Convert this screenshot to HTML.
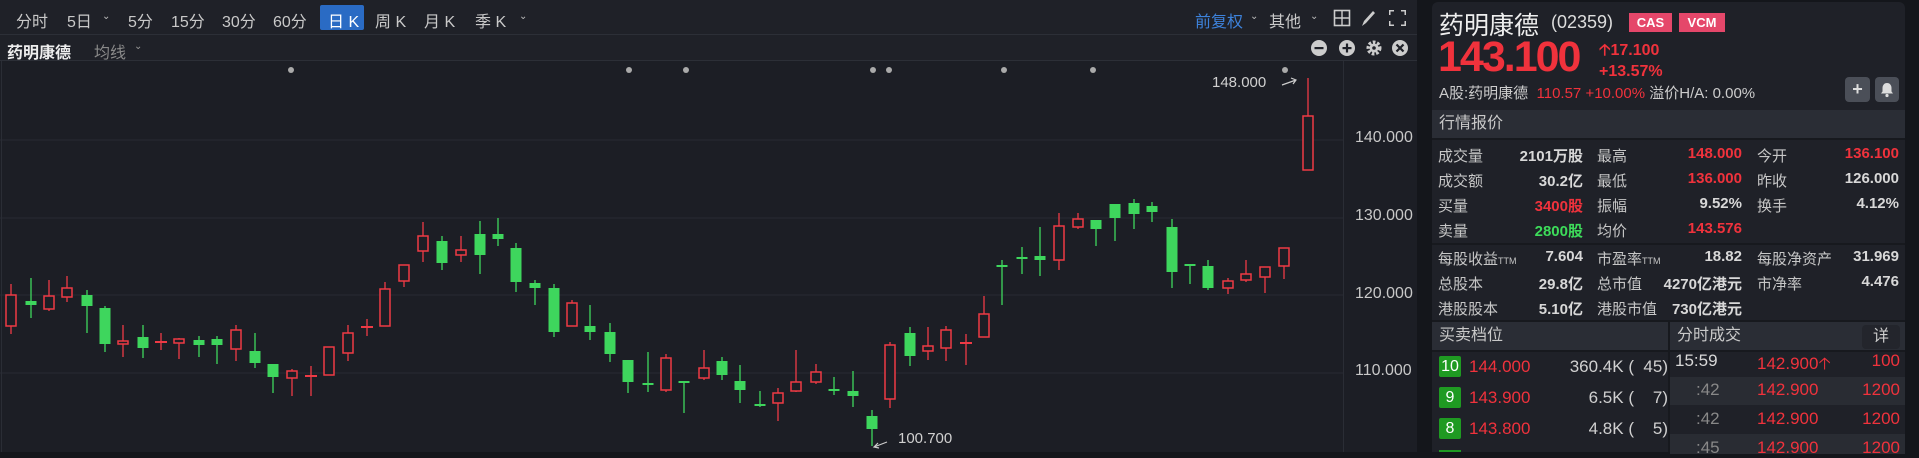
<!DOCTYPE html>
<html><head><meta charset="utf-8">
<style>
*{margin:0;padding:0;box-sizing:border-box}
body{width:1919px;height:452px;background:#14161b;font-family:"Liberation Sans","Noto Sans CJK SC",sans-serif;position:relative;overflow:hidden;color:#d0d0d0}
.a{position:absolute;white-space:nowrap}
#left{position:absolute;left:0;top:0;width:1417px;height:452px;background:#1c1e25}
#tb{position:absolute;left:0;top:0;width:1417px;height:35px;background:#1f2128;border-bottom:1px solid #2c2f37}
#tb2{position:absolute;left:0;top:35px;width:1417px;height:26px;background:#1f2128;border-bottom:1px solid #2c2f37}
.t{font-size:16px;color:#c9c9c9;top:8px}
.chev{font-size:10px;color:#bbb}
#rp{position:absolute;left:1432px;top:2px;width:473px;height:450px;background:#1f2128;border-radius:6px 6px 0 0}
.hdr{position:absolute;background:#2a2d35;font-size:16px;color:#c9c9c9;padding-left:7px;line-height:28px}
.r{position:absolute;font-size:15px;white-space:nowrap}
.lb{color:#c6c6c6}
.v{font-weight:bold;color:#d8d8d8;text-align:right}
.red{color:#f0323c}.grn{color:#3ddc5a}
.bd{position:absolute;width:22px;height:21px;background:#1f9a22;color:#fff;font-size:16px;text-align:center;line-height:21px;border-radius:2px}
.ax{position:absolute;font-size:16px;color:#c8c8c8;left:1355px}
</style></head><body>
<div id="left"></div>
<div id="tb">
 <span class="a t" style="left:16px">分时</span>
 <span class="a t" style="left:67px">5日</span><span class="a chev" style="left:102px;top:11px">&#8964;</span>
 <span class="a t" style="left:128px">5分</span>
 <span class="a t" style="left:171px">15分</span>
 <span class="a t" style="left:222px">30分</span>
 <span class="a t" style="left:273px">60分</span>
 <div class="a" style="left:320px;top:5px;width:44px;height:25px;background:#2a6bc4;border-radius:2px"></div>
 <span class="a t" style="left:328px;color:#fff">日 K</span>
 <span class="a t" style="left:375px">周 K</span>
 <span class="a t" style="left:424px">月 K</span>
 <span class="a t" style="left:475px">季 K</span><span class="a chev" style="left:519px;top:11px">&#8964;</span>
 <span class="a t" style="left:1195px;color:#3d82db">前复权</span><span class="a chev" style="left:1250px;top:11px">&#8964;</span>
 <span class="a t" style="left:1269px">其他</span><span class="a chev" style="left:1310px;top:11px">&#8964;</span>
 <svg class="a" style="left:1333px;top:9px" width="74" height="18" viewBox="0 0 74 18">
  <rect x="1.5" y="1.5" width="15" height="15" fill="none" stroke="#ccc" stroke-width="1.6"/><path d="M9 1.5V16.5M1.5 9H16.5" stroke="#ccc" stroke-width="1.4"/>
  <path d="M29 17l2-5 9-10 2 2-9 10z" fill="#ccc"/>
  <path d="M56 1h5v1.5h-3.5V6H56zM73 1h-5v1.5h3.5V6H73zM56 17h5v-1.5h-3.5V12H56zM73 17h-5v-1.5h3.5V12H73z" fill="#ccc"/>
 </svg>
</div>
<div id="tb2">
 <span class="a" style="left:7px;top:4px;font-size:16px;font-weight:bold;color:#eee">药明康德</span>
 <span class="a" style="left:94px;top:4px;font-size:16px;color:#8a8a8a">均线</span><span class="a chev" style="left:134px;top:6px;color:#999">&#8964;</span>
 <svg class="a" style="left:1310px;top:4px" width="100" height="18" viewBox="0 0 100 18">
  <circle cx="9" cy="9" r="8" fill="#ccc"/><rect x="4.5" y="8" width="9" height="2.2" fill="#1f2128"/>
  <circle cx="37" cy="9" r="8" fill="#ccc"/><rect x="32.5" y="8" width="9" height="2.2" fill="#1f2128"/><rect x="35.9" y="4.5" width="2.2" height="9" fill="#1f2128"/>
  <circle cx="64" cy="9" r="5.5" fill="none" stroke="#ccc" stroke-width="4" stroke-dasharray="2.5 1.6"/><circle cx="64" cy="9" r="4.5" fill="#ccc"/><circle cx="64" cy="9" r="1.8" fill="#1f2128"/>
  <circle cx="90" cy="9" r="8" fill="#ccc"/><path d="M86.5 5.5l7 7M93.5 5.5l-7 7" stroke="#1f2128" stroke-width="2.2"/>
 </svg>
</div>
<svg id="ch" class="a" style="left:0;top:0" width="1417" height="452"></svg>
<span class="ax" style="top:129px">140.000</span>
<span class="ax" style="top:207px">130.000</span>
<span class="ax" style="top:285px">120.000</span>
<span class="ax" style="top:362px">110.000</span>
<span class="a" style="left:1212px;top:74px;font-size:15px;color:#d0d0d0">148.000</span>
<span class="a" style="left:898px;top:430px;font-size:15px;color:#d0d0d0">100.700</span>

<div id="rp">
 <span class="a" style="left:7px;top:4px;font-size:25px;color:#eee">药明康德</span>
 <span class="a" style="left:119px;top:10px;font-size:18px;color:#ddd">(02359)</span>
 <span class="a" style="left:197px;top:11px;width:43px;height:19px;background:#e5476a;color:#fff;font-size:13px;font-weight:bold;text-align:center;line-height:19px">CAS</span>
 <span class="a" style="left:247px;top:11px;width:46px;height:19px;background:#e5476a;color:#fff;font-size:13px;font-weight:bold;text-align:center;line-height:19px">VCM</span>
 <span class="a" style="left:6px;top:31px;font-size:43px;font-weight:bold;color:#f0323c;letter-spacing:-2px">143.100</span>
 <span class="a" style="left:167px;top:37px;font-size:16px;font-weight:bold;color:#f0323c">&#129121;17.100</span>
 <span class="a" style="left:167px;top:61px;font-size:16px;font-weight:bold;color:#f0323c">+13.57%</span>
 <span class="a" style="left:7px;top:80px;font-size:15px;color:#ccc">A股:药明康德 <span style="color:#f0323c">&nbsp;110.57 +10.00%</span> 溢价H/A: 0.00%</span>
 <div class="a" style="left:413px;top:75px;width:25px;height:25px;background:#4b4f58;border-radius:4px;color:#ddd;text-align:center;font-weight:bold;line-height:25px;font-size:18px">+</div>
 <div class="a" style="left:443px;top:75px;width:24px;height:25px;background:#4b4f58;border-radius:4px"><svg width="24" height="25" viewBox="0 0 24 25"><path d="M12 6c-3 0-4.5 2.5-4.5 5v3.5l-1.5 2h12l-1.5-2V11c0-2.5-1.5-5-4.5-5z" fill="#ddd"/><circle cx="12" cy="18.5" r="1.6" fill="#ddd"/></svg></div>
 <div class="hdr" style="left:0;top:108px;width:473px;height:28px">行情报价</div>
 <div class="a" style="left:0;top:136px;width:473px;height:2px;background:#17191e"></div>
 <div class="a" style="left:0;top:241px;width:473px;height:2px;background:#17191e"></div>
 <div class="a" style="left:0;top:318px;width:473px;height:2px;background:#17191e"></div>
 <div class="hdr" style="left:0;top:320px;width:236px;height:28px">买卖档位</div>
 <div class="hdr" style="left:238px;top:320px;width:235px;height:28px">分时成交</div>
 <div class="a" style="left:430px;top:323px;width:38px;height:24px;background:#23252c;border-radius:4px;color:#ccc;font-size:16px;text-align:center;line-height:24px">详</div>
 <div class="a" style="left:0;top:348px;width:473px;height:2px;background:#17191e"></div>
 <div class="a" style="left:236px;top:320px;width:2px;height:130px;background:#17191e"></div>
 <div class="a" style="left:238px;top:375px;width:235px;height:28px;background:#292c33"></div>
 <div class="a" style="left:238px;top:432px;width:235px;height:20px;background:#292c33"></div>
</div>
<div id="rows"></div>
<script>
let h='';
function t(x,y,s,c,w){h+=`<span class="r ${c}" style="left:${x}px;top:${y}px;${w?`width:${w}px;`:''}">${s}</span>`;}
const rows=[["成交量","2101万股","","最高","148.000","red","今开","136.100","red"],
["成交额","30.2亿","","最低","136.000","red","昨收","126.000",""],
["买量","3400股","red","振幅","9.52%","","换手","4.12%",""],
["卖量","2800股","grn","均价","143.576","red","","",""]];
rows.forEach((r,i)=>{const y=145+i*25;t(1438,y,r[0],'lb');t(1500,y,r[1],'v '+r[2],83);t(1597,y,r[3],'lb');t(1660,y,r[4],'v '+r[5],82);t(1757,y,r[6],'lb');t(1820,y,r[7],'v '+r[8],79);});
const r2=[["每股收益<small style='font-size:9px'>TTM</small>","7.604","市盈率<small style='font-size:9px'>TTM</small>","18.82","每股净资产","31.969"],
["总股本","29.8亿","总市值","4270亿港元","市净率","4.476"],["港股股本","5.10亿","港股市值","730亿港元","",""]];
r2.forEach((r,i)=>{const y=248+i*25;t(1438,y,r[0],'lb');t(1520,y,r[1],'v',63);t(1597,y,r[2],'lb');t(1660,y,r[3],'v',82);t(1757,y,r[4],'lb');t(1840,y,r[5],'v',59);});
[["10","144.000","360.4K (&nbsp;&nbsp;45)"],["9","143.900","6.5K (&nbsp;&nbsp;&nbsp;&nbsp;7)"],["8","143.800","4.8K (&nbsp;&nbsp;&nbsp;&nbsp;5)"]].forEach((r,i)=>{const y=356+i*31;h+=`<div class="bd" style="left:1439px;top:${y}px">${r[0]}</div>`;h+=`<span class="r" style="left:1469px;top:${y+1}px;font-size:17px;color:#f0323c">${r[1]}</span>`;h+=`<span class="r" style="left:1540px;top:${y+1}px;width:128px;text-align:right;font-size:17px;color:#d0d0d0">${r[2]}</span>`;});
h+=`<div class="a" style="left:1439px;top:450px;width:22px;height:2px;background:#1f9a22"></div>`;
[["15:59","142.900&#129121;","100",351,"#d8d8d8"],[":42","142.900","1200",380,"#888"],[":42","142.900","1200",409,"#888"],[":45","142.900","1200",438,"#888"]].forEach((r,i)=>{const x=i?1696:1675;h+=`<span class="r" style="left:${x}px;top:${r[3]}px;font-size:17px;color:${r[4]}">${r[0]}</span><span class="r" style="left:1757px;top:${r[3]}px;font-size:17px;color:#f0323c">${r[1]}</span><span class="r" style="left:1840px;top:${r[3]}px;width:60px;text-align:right;font-size:17px;color:#f0323c">${r[2]}</span>`;});
document.getElementById('rows').innerHTML=h;

let s='';
[140,218,295,373].forEach(y=>s+=`<line x1="0" y1="${y}" x2="1343" y2="${y}" stroke="#282b33" stroke-width="1"/>`);
s+=`<line x1="1343.5" y1="61" x2="1343.5" y2="452" stroke="#2a2d35"/>`;
s+=`<line x1="1.5" y1="61" x2="1.5" y2="452" stroke="#2a2d35"/>`;
const C=[[11,'r',295,326,284,334],[31,'g',301,305,278,318],[49,'r',296,309,280,311],[67,'r',288,297,276,302],[87,'g',295,306,290,333],[105,'g',308,344,306,352],[123,'r',341,344,325,357],[143,'g',337,348,325,358],[161,'r',341,342,333,350],[179,'r',339,343,338,359],[199,'g',340,345,336,357],[217,'g',339,345,336,364],[236,'r',330,349,325,361],[255,'g',351,363,333,368],[273,'g',364,377,364,393],[292,'r',371,378,369,396],[311,'r',375,376,366,396],[329,'r',347,375,347,375],[348,'r',333,353,325,361],[367,'r',326,327,319,336],[385,'r',289,326,282,326],[404,'r',265,281,265,287],[423,'r',236,251,222,262],[442,'g',241,263,236,270],[461,'r',250,255,236,262],[480,'g',234,255,221,274],[498,'g',234,239,218,246],[516,'g',248,282,243,292],[535,'g',283,288,280,305],[554,'g',288,332,284,337],[572,'r',303,326,300,326],[590,'g',326,332,305,340],[610,'g',332,354,323,362],[628,'g',360,382,360,393],[648,'g',383,384,352,392],[666,'r',358,390,354,392],[684,'g',381,382,381,413],[704,'r',368,378,350,380],[722,'g',361,375,357,380],[740,'g',381,390,365,403],[760,'g',404,405,391,407],[778,'r',393,403,388,421],[796,'r',382,391,350,392],[816,'r',372,382,364,384],[834,'g',389,390,377,395],[853,'g',391,396,371,407],[872,'g',416,429,410,446],[890,'r',345,399,342,408],[910,'g',333,356,327,366],[928,'r',346,351,327,360],[946,'r',330,348,326,361],[966,'r',342,343,334,365],[984,'r',314,337,296,337],[1002,'g',265,266,260,305],[1022,'g',257,258,247,274],[1040,'g',256,260,227,276],[1059,'r',226,260,213,270],[1078,'r',219,227,213,229],[1096,'g',220,229,220,246],[1115,'g',204,218,204,241],[1134,'g',203,214,199,229],[1152,'g',206,212,202,222],[1172,'g',227,272,219,288],[1190,'g',264,265,264,284],[1208,'g',266,288,260,290],[1228,'r',281,288,278,294],[1246,'r',274,280,260,282],[1265,'r',267,277,267,293],[1284,'r',248,266,248,279],[1308,'r',116,170,78,170]];
C.forEach(c=>{const[x,k,bt,bb,wt,wb]=c;const col=k=='r'?'#ee3a45':'#3ed65d';
s+=`<line x1="${x}" y1="${wt}" x2="${x}" y2="${wb}" stroke="${col}" stroke-width="1.3"/>`;
const hgt=Math.max(bb-bt,1);
if(k=='g')s+=`<rect x="${x-5.5}" y="${bt}" width="11" height="${Math.max(hgt,2)}" fill="${col}"/>`;
else if(hgt<=2)s+=`<rect x="${x-6}" y="${bt}" width="12" height="2" fill="${col}"/>`;
else s+=`<rect x="${x-5}" y="${bt}" width="10" height="${hgt}" fill="#1c1e25" stroke="${col}" stroke-width="1.5"/>`;});
[291,629,686,873,889,1004,1093,1285].forEach(x=>s+=`<circle cx="${x}" cy="70" r="3" fill="#aaa"/>`);
s+=`<path d="M1282 85L1296 80M1291 78l5 2-3 4" stroke="#ccc" fill="none" stroke-width="1.2"/>`;
s+=`<path d="M887 442L874 447M878 443l-4 4 5 1" stroke="#ccc" fill="none" stroke-width="1.2"/>`;
document.getElementById('ch').innerHTML=s;
</script>
</body></html>
